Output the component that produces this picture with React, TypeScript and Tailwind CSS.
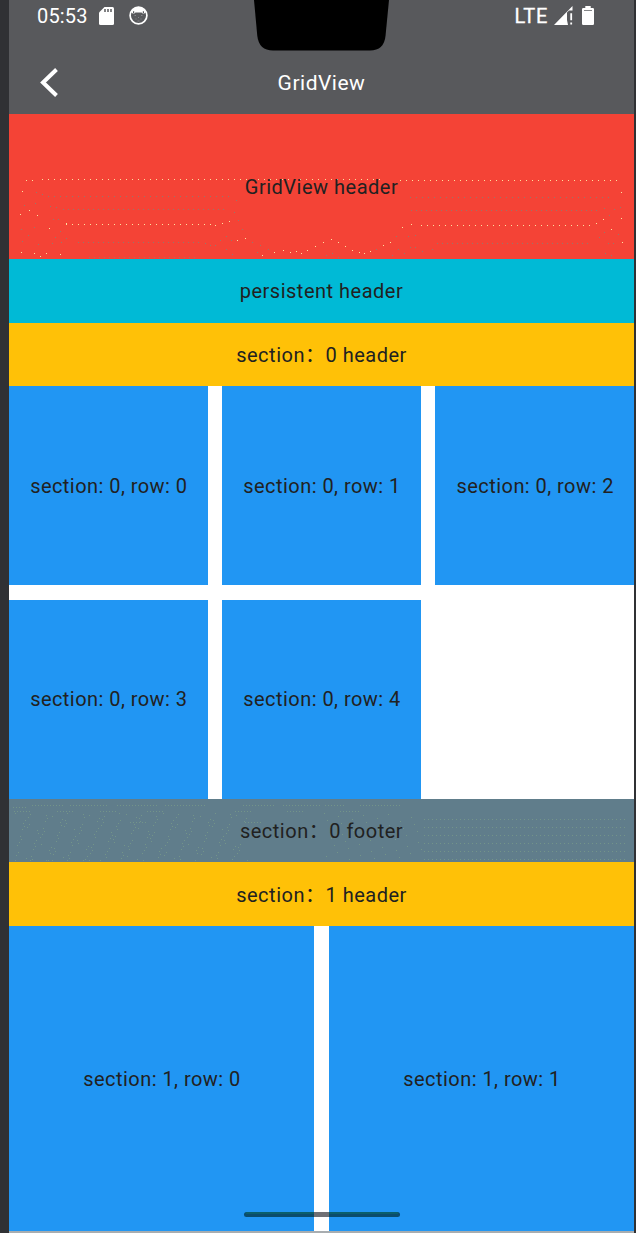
import React from "react";

type Run = [number, number, number, number];

const paleRuns: Run[] = [
  [42, 320, 179, 6], [325, 384, 179, 6], [400, 618, 180, 6], [66, 212, 224, 6], [421, 592, 225, 6],
];
const grayRuns: Run[] = [
  [48, 232, 196, 6], [63, 226, 209, 5], [78, 202, 242, 5], [89, 197, 257, 5],
  [410, 611, 197, 6], [411, 600, 210, 5], [437, 590, 243, 5],
];
const palePoints = [
  [26, 180], [32, 180], [22, 191], [29, 210], [20, 214], [37, 215], [49, 228], [21, 252], [34, 253], [40, 256], [46, 253], [60, 254],
  [66, 223], [215, 225], [222, 223], [229, 221], [245, 238], [237, 240], [262, 255], [274, 252], [283, 250], [290, 252], [296, 251], [301, 253], [307, 250], [315, 246],
  [323, 242], [331, 239], [338, 242], [345, 246], [352, 250], [359, 252], [364, 253], [370, 251], [383, 245], [390, 242], [402, 227], [411, 224],
  [596, 223], [603, 219], [611, 229], [621, 192], [621, 218], [622, 242],
];
const grayPoints = [
  [24, 205], [36, 192], [42, 194], [35, 203], [50, 206], [56, 207], [53, 219], [58, 219], [34, 227], [28, 235], [21, 229], [22, 241], [38, 244], [60, 231], [66, 238], [52, 243], [61, 242], [55, 237],
  [236, 200], [234, 212], [238, 220], [242, 229], [226, 236], [231, 240], [220, 240], [215, 245], [210, 245], [205, 243], [226, 249], [232, 254], [252, 242], [260, 245], [268, 249], [257, 252],
  [326, 255], [332, 253], [338, 257], [376, 249], [392, 255], [398, 249], [404, 253], [396, 236], [408, 236], [415, 235], [410, 247], [415, 247], [422, 251], [432, 249],
  [604, 208], [609, 215], [614, 209], [620, 207], [604, 232], [599, 237], [608, 243], [613, 243], [605, 253], [611, 255], [618, 234],
];

const runPath = (runs: Run[], left: number, top: number) =>
  runs
    .map(([a, b, y, s]) =>
      Array.from({ length: Math.floor((b - a) / s) + 1 }, (_, i) => `M${a + i * s - left} ${y - top}h1v1h-1z`).join(""),
    )
    .join("");
const pointPath = (points: number[][]) => points.map(([x, y]) => `M${x - 9} ${y - 114}h1v1h-1z`).join("");

const footerRuns: Run[] = [819, 827, 835, 843, 851, 859].map((y) => [424, 625, y, 4] as Run);
const footerTop: Run[] = [
  [13, 26, 807, 3], [32, 63, 805, 3], [70, 107, 805, 3], [117, 158, 805, 3], [165, 204, 805, 3], [243, 275, 805, 3], [283, 319, 805, 3], [325, 345, 805, 3], [360, 400, 805, 3],
  [14, 29, 811, 3], [57, 72, 811, 3], [100, 116, 811, 3], [147, 164, 811, 3], [235, 250, 811, 3], [287, 304, 811, 3], [340, 358, 811, 3], [130, 147, 822, 3], [245, 262, 822, 3],
];
const scatter = Array.from({ length: 235 }, (_, i) => {
  const row = Math.floor(i / 19);
  const x = 6 + (i % 19) * 12.3 + ((row * 7 + (i % 3) * 3) % 12);
  const y = 14 + row * 4 + ((i * 5) % 4);
  return `M${Math.round(x)} ${Math.min(61, y)}h1v1h-1z`;
}).join("");
const scatterRight = Array.from({ length: 45 }, (_, i) =>
  `M${315 + ((i * 29) % 98)} ${14 + ((i * 17) % 47)}h1v1h-1z`,
).join("");

function StatusBar() {
  return (
    <div className="relative flex h-[51px] items-start text-white">
      <span className="ml-7 mt-[4px] w-[51px] text-[20px] leading-6 tracking-[0.15px]">05:53</span>
      <svg className="ml-[11px] mt-[7px] h-[18px] w-[15px] shrink-0" viewBox="0 0 15 18">
        <path fill="#fff" d="M5.5 0H13.5Q15 0 15 1.5V16.5Q15 18 13.5 18H1.5Q0 18 0 16.5V5.5Z" />
        <path stroke="#58595c" strokeWidth="1.5" d="M6 2v3M9 2v3M12 2v3" />
      </svg>
      <svg className="ml-[15px] mt-[6px] h-[19px] w-[19px] shrink-0" viewBox="0 0 19 19">
        <circle cx="9.5" cy="9.5" r="8.4" fill="none" stroke="#fff" strokeWidth="1.7" />
        <path fill="#fff" d="M3 4.5 6 1.8h7l3 2.7.6 2.5-2.6.8-1.5-1.2h-6L5 7.8 2.4 7z" />
        <path fill="#58595c" d="M4 5.2h1.2v2H4zM13.8 5.2H15v2h-1.2z" />
        <path stroke="#85868a" strokeWidth="1" d="M5.5 9.5h1.5M12 9.5h1.5M9 11.5h1M6.5 13h1M11.5 13h1M8.5 15h2" />
      </svg>
      <svg className="absolute left-[245px] top-0 h-[51px] w-[135px]" viewBox="0 0 135 51">
        <path d="M0 0H135L131.5 36Q130 50.5 116 50.5H19Q5 50.5 3.3 36Z" fill="#000" />
      </svg>
      <span className="ml-auto mt-[4px] text-[20px] leading-6 tracking-[0.7px] [-webkit-text-stroke:0.3px_white]">LTE</span>
      <svg className="ml-[6px] mr-px mt-[6px] h-[19px] w-[19px] shrink-0" viewBox="0 0 19 19">
        <path fill="#fff" d="M0 19 18.5 0v4.5h-3.5l-2 2V14l1 5z" />
        <path fill="#fff" d="M16.3 7.2h1.8v7h-1.8zM16.3 16.5h1.8v2h-1.8z" />
      </svg>
      <svg className="ml-[8px] mr-10 mt-[6px] h-[19px] w-[12px] shrink-0" viewBox="0 0 12 19">
        <path fill="#fff" d="M3.3 0h5.4v2h2.1Q12 2 12 3.2v14.6Q12 19 10.8 19H1.2Q0 19 0 17.8V3.2Q0 2 1.2 2h2.1z" />
        <path stroke="#858689" d="M2 4.5h8" />
      </svg>
    </div>
  );
}

function Cell({ section, row }: { section: number; row: number }) {
  return (
    <div className={`flex items-center justify-center whitespace-nowrap bg-[#2196f3] pl-px tracking-[0.45px] ${row > 2 ? "pb-px" : "pb-0"}`}>
      section: {section}, row: {row}
    </div>
  );
}

export default function App() {
  return (
    <div className="h-[1233px] w-[636px] overflow-hidden bg-[#303134] pl-[9px] pr-[2px] font-['Roboto','Noto_Sans_CJK_SC',sans-serif] text-[20px] leading-6 tracking-[0.5px] text-[#212121]">
      <div className="flex h-[1233px] flex-col bg-white">
        <header className="h-[114px] shrink-0 bg-[#58595c] tracking-normal">
          <StatusBar />
          <div className="relative flex h-[63px] items-center justify-center pt-px text-[21px] tracking-[0.5px] text-white">
            <svg className="absolute left-[31px] top-[16px] h-[31px] w-[19px]" viewBox="0 0 19 31">
              <path d="M16.5 2.5 3 15.5 16.5 28.5" fill="none" stroke="#fff" strokeWidth="4" />
            </svg>
            GridView
          </div>
        </header>
        <div className="relative flex h-[145px] shrink-0 items-center justify-center bg-[#f44336]">
          <svg className="absolute inset-0 h-full w-full" viewBox="0 0 625 145" shapeRendering="crispEdges">
            <path fill="#ffe0a0" d={runPath(paleRuns, 9, 114) + pointPath(palePoints)} />
            <path fill="#96776b" d={runPath(grayRuns, 9, 114) + pointPath(grayPoints)} />
          </svg>
          <span className="relative">GridView header</span>
        </div>
        <div className="flex h-16 shrink-0 items-center justify-center bg-[#00bad6]">persistent header</div>
        <div className="flex h-[63px] shrink-0 items-center justify-center bg-[#ffc107] pt-px">section：0 header</div>
        <div className="grid h-[413px] shrink-0 grid-cols-3 grid-rows-[199px_199px] gap-x-[14.5px] gap-y-[15px]">
          {[0, 1, 2, 3, 4].map((row) => (
            <Cell key={row} section={0} row={row} />
          ))}
        </div>
        <div className="relative flex h-[63px] shrink-0 items-center justify-center bg-[#607d8b] pt-px">
          <svg className="absolute inset-0 h-full w-full" viewBox="0 0 625 63" shapeRendering="crispEdges">
            <path fill="#739489" d={runPath([...footerRuns, ...footerTop], 9, 799) + scatter + scatterRight} />
          </svg>
          <span className="relative">section：0 footer</span>
        </div>
        <div className="flex h-[64px] shrink-0 items-center justify-center bg-[#ffc107] pt-px">section：1 header</div>
        <div className="relative grid h-[305px] shrink-0 grid-cols-2 gap-[15px]">
          <Cell section={1} row={0} />
          <Cell section={1} row={1} />
          <div className="absolute left-[235px] top-[286px] h-[5px] w-[156px] rounded-full bg-[#063f54]/85">
            <div className="mx-[2px] h-[2px] bg-[#0a6b6b]/60" />
            <div className="absolute left-[70px] top-0 h-[5px] w-[15px] bg-[#707074]" />
          </div>
        </div>
        <div className="h-[2px] shrink-0 bg-[#a8adb0]" />
      </div>
    </div>
  );
}
